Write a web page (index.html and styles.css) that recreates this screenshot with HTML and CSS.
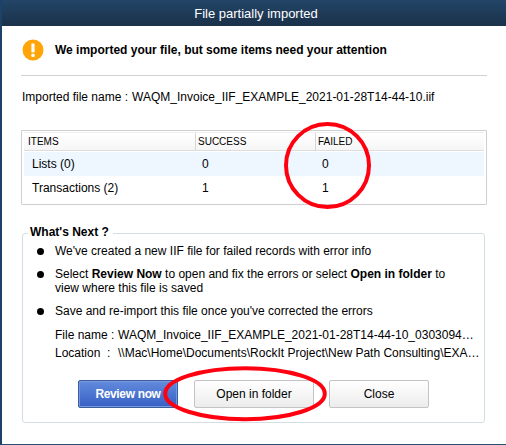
FILE: index.html
```html
<!DOCTYPE html>
<html lang="en">
<head>
<meta charset="utf-8">
<title>File partially imported</title>
<link rel="stylesheet" href="styles.css">
</head>
<body>
<main class="dialog">
  <header class="titlebar"><h1>File partially imported</h1></header>
  <div class="content">
    <section class="notice">
      <svg class="warning" viewBox="0 0 22 22" aria-hidden="true"><circle cx="11" cy="11" r="10.5" fill="#ffa507"/><path d="M9.4 4.5h3.2v8.8H9.4z" fill="#fff"/><circle cx="11" cy="16.4" r="1.8" fill="#fff"/></svg>
      <strong>We imported your file, but some items need your attention</strong>
    </section>
    <p class="filename"><span class="label">Imported file name :</span><span class="value">WAQM_Invoice_IIF_EXAMPLE_2021-01-28T14-44-10.iif</span></p>
    <div class="table">
      <div class="row head"><span>ITEMS</span><span>SUCCESS</span><span>FAILED</span></div>
      <div class="row shaded"><span>Lists (0)</span><span>0</span><span>0</span></div>
      <div class="row"><span>Transactions (2)</span><span>1</span><span>1</span></div>
    </div>
    <section class="next">
      <h2>What's Next ?</h2>
      <ul>
        <li>We've created a new IIF file for failed records with error info</li>
        <li>Select <b>Review Now</b> to open and fix the errors or select <b>Open in folder</b> to<br>view where this file is saved</li>
        <li>Save and re-import this file once you've corrected the errors</li>
      </ul>
      <div class="paths">
        <p><span class="key">File name :</span><span>WAQM_Invoice_IIF_EXAMPLE_2021-01-28T14-44-10_0303094…</span></p>
        <p><span class="key">Location &nbsp;:</span><span>\\Mac\Home\Documents\RockIt Project\New Path Consulting\EXA…</span></p>
      </div>
      <div class="actions">
        <button class="primary">Review now</button>
        <button class="folder">Open in folder</button>
        <button>Close</button>
      </div>
    </section>
  </div>
  <svg class="marks" viewBox="0 0 506 445" aria-hidden="true"><ellipse cx="327.5" cy="165.5" rx="41.5" ry="41.5"/><ellipse cx="245" cy="393.7" rx="79.8" ry="25.5"/></svg>
</main>
</body>
</html>
```
FILE: styles.css
```css
* { box-sizing: border-box; }
body { margin: 0; font: 12px/14px "Liberation Sans", Arial, sans-serif; color: #000; }
h1, h2, p, ul { margin: 0; padding: 0; font-size: inherit; }
.dialog { position: relative; width: 506px; height: 445px; border-left: 2px solid #1d4267; border-bottom: 1px solid #294d70; background: #fff; overflow: hidden; }
.titlebar { height: 26px; margin-left: -2px; padding-top: 5px; background: linear-gradient(#234567, #1a3149); color: #fff; text-align: center; }
.titlebar h1 { padding-left: 6px; font-size: 13px; line-height: 17px; font-weight: normal; }
.content { padding-left: 19px; }
.notice { display: flex; align-items: center; width: 466px; height: 50px; padding-bottom: 2px; border-bottom: 1px solid #d1d1d1; }
.notice strong { margin-left: 11px; }
.warning { width: 22px; height: 22px; margin-left: 1px; }
.filename { display: flex; margin: 14px 0 26px 1px; }
.filename .value { margin-left: 4px; }
.table { width: 466px; height: 75px; padding: 2px 2px 0; border: 1px solid #cfcfcf; border-radius: 1px; }
.row { display: grid; grid-template-columns: 171px 120px 1fr; height: 23px; align-items: center; }
.row span { padding-left: 8px; }
.row span + span { padding-left: 7px; }
.head { height: 19px; margin: -1px 0 1px; font-size: 10px; border-top: 1px solid #f0f0f0; border-bottom: 1px solid #ddd; background: linear-gradient(#fff, #f6f6f6); }
.head span { height: 18px; line-height: 18px; padding-left: 4px; }
.head span + span { padding-left: 2px; border-left: 1px solid #d6d6d6; }
.shaded { height: 24px; background: #eef7ff; border-radius: 2px; }
.next { width: 463px; height: 190px; margin: 28px 0 0 1px; border: 1px solid #d4dde4; border-radius: 3px; }
.next h2 { width: max-content; margin: -9px 0 0 5px; padding: 0 4px 0 2px; background: #fff; }
ul { list-style: none; margin-top: 5px; }
li { position: relative; padding-left: 32px; margin-bottom: 9px; }
li::before { content: ""; position: absolute; left: 14px; top: 4px; width: 7px; height: 7px; border-radius: 50%; background: #000; }
.paths { padding-left: 32px; margin-top: 8px; line-height: 18px; }
li:last-child { margin-bottom: 0; }
.paths p { display: flex; white-space: nowrap; }
.key { width: 63px; white-space: pre; }
.actions { display: flex; margin: 18px 0 0 55px; }
button { width: 100px; height: 28px; padding: 0; border: 1px solid #c4c4c4; border-radius: 2px; background: linear-gradient(#fff, #ececec); color: #000; font: inherit; }
.primary { border-color: #3b5c9e; background: linear-gradient(#628bdc, #3760c5); box-shadow: inset 0 0 0 1px #7599dc; color: #fff; font-weight: bold; letter-spacing: -0.35px; }
.folder { width: 120px; margin: 0 15px 0 16px; }
.marks { position: absolute; left: -2px; top: 0; width: 506px; height: 445px; fill: none; stroke: #ff0010; stroke-width: 4; pointer-events: none; }
```
